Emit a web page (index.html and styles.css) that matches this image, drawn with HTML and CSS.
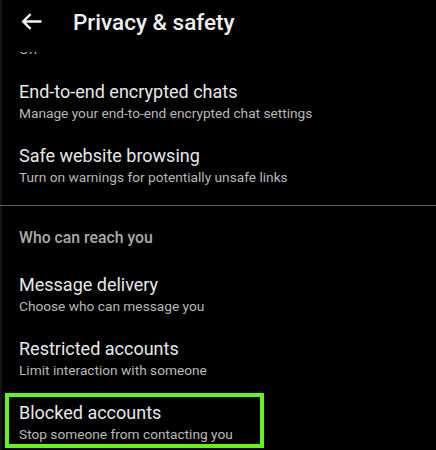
FILE: index.html
```html
<!DOCTYPE html>
<html lang="en">
<head>
<meta charset="utf-8">
<title>Privacy &amp; safety</title>
<link rel="stylesheet" href="styles.css">
</head>
<body>
<div class="screen">
  <header class="appbar">
    <svg class="back" width="21" height="17" viewBox="0 0 21 17" aria-hidden="true">
      <path d="M20.5 8.5H2.2M9.6 1.2L2.2 8.5l7.4 7.3" fill="none" stroke="#f2f2f2" stroke-width="2.4"/>
    </svg>
    <h1 class="appbar-title">Privacy &amp; safety</h1>
  </header>
  <div class="clipped"><p class="sub">Off</p></div>
  <ul class="list">
    <li class="item">
      <p class="title">End-to-end encrypted chats</p>
      <p class="sub">Manage your end-to-end encrypted chat settings</p>
    </li>
    <li class="item">
      <p class="title">Safe website browsing</p>
      <p class="sub">Turn on warnings for potentially unsafe links</p>
    </li>
  </ul>
  <hr class="divider">
  <h2 class="section">Who can reach you</h2>
  <ul class="list">
    <li class="item">
      <p class="title">Message delivery</p>
      <p class="sub">Choose who can message you</p>
    </li>
    <li class="item">
      <p class="title">Restricted accounts</p>
      <p class="sub">Limit interaction with someone</p>
    </li>
    <li class="item item-highlight">
      <p class="title">Blocked accounts</p>
      <p class="sub">Stop someone from contacting you</p>
      <span class="highlight"></span>
    </li>
  </ul>
</div>
</body>
</html>
```
FILE: styles.css
```css
html, body {
  margin: 0;
  padding: 0;
  background: #000;
}
body {
  font-family: Roboto, "Liberation Sans", sans-serif;
  color: #e6e6e6;
  box-shadow: inset 2px 0 #151515;
  min-height: 450px;
  overflow: hidden;
}
.screen {
  width: 436px;
}
.appbar {
  height: 52px;
  box-sizing: border-box;
  padding: 0 0 9px 21px;
  display: flex;
  align-items: center;
}
.back {
  display: block;
  flex: none;
}
.appbar-title {
  margin: 0 0 0 31px;
  font-size: 22.5px;
  line-height: 28px;
  font-weight: 500;
  color: #f0f0f0;
}
.clipped {
  height: 17px;
  overflow: hidden;
  padding-left: 19px;
}
.clipped .sub {
  margin-top: -12px;
}
.list {
  list-style: none;
  margin: 0;
  padding: 0;
}
.item {
  padding: 12px 19px 11px;
  position: relative;
}
.title {
  margin: 0;
  font-size: 18px;
  line-height: 22px;
  color: #e8e8e8;
}
.sub {
  margin: 1px 0 0;
  font-size: 13.7px;
  line-height: 18px;
  color: #b9b9b9;
}
.divider {
  margin: 8px 0 0;
  border: 0;
  height: 1px;
  background: #5e5e5e;
}
.section {
  margin: 22px 0 0;
  padding: 0 19px 14px;
  font-size: 15.8px;
  line-height: 20px;
  font-weight: 500;
  color: #ababab;
}
.highlight {
  position: absolute;
  left: 5px;
  top: 3px;
  width: 259px;
  height: 55px;
  box-sizing: border-box;
  border: 4px solid #62f51c;
  pointer-events: none;
}
```
